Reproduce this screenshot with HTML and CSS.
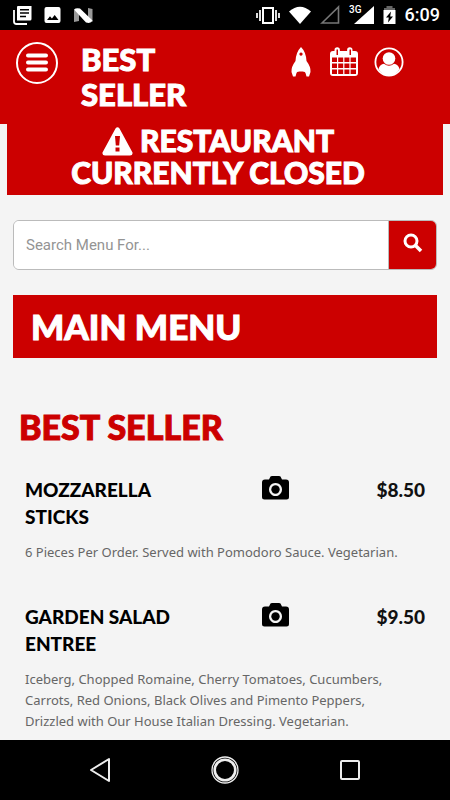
FILE: index.html
```html
<!DOCTYPE html>
<html lang="en">
<head>
<meta charset="utf-8">
<meta name="viewport" content="width=device-width, initial-scale=1">
<title>Main Menu</title>
<link rel="stylesheet" href="styles.css">
</head>
<body>
<div class="status">
  <div class="status-left">
    <svg width="20" height="20" viewBox="0 0 20 20"><path d="M2 5v11.500a2.500 2.500 0 0 0 2.500 2.500H15" fill="none" stroke="#fff" stroke-width="1.800"/><path fill="#fff" fill-rule="evenodd" d="M6 1h13.500v13a1.500 1.500 0 0 1-1.500 1.500H5V2A1 1 0 0 1 6 1zM8 4v1.500h9V4zM8 7.300v1.500h9V7.300zM8 10.700v1.500h6v-1.500z"/></svg>
    <svg width="18" height="20" viewBox="0 0 18 20"><path fill="#fff" fill-rule="evenodd" d="M2.500 2h12A2 2 0 0 1 16.500 4v12a2 2 0 0 1-2 2h-12a2 2 0 0 1-2-2V4a2 2 0 0 1 2-2zM3 15h11.500l-3.800-5-2.800 3.500L6 11.200z"/></svg>
    <svg width="20" height="20" viewBox="0 0 20 20"><path fill="#999" d="M0 5l5 1v10l-5 1zM14 3l4.500 1v13l-4.500-3z"/><path fill="#fff" d="M0 4.500Q2 2.500 6 3.500L18.500 15.500Q17 19 12 17.500z"/></svg>
  </div>
  <div class="status-right">
    <svg width="24" height="20" viewBox="0 0 24 20"><path fill="none" stroke="#fff" stroke-width="2" d="M7 3h10v15H7z"/><path stroke="#ddd" stroke-width="2" d="M4 5v11M20 5v11M1 8v5M23 8v5"/></svg>
    <svg width="22" height="20" viewBox="0 0 22 20"><path fill="#fff" d="M0 6.500Q11-3 22 6.500L11 19z"/></svg>
    <svg width="20" height="20" viewBox="0 0 20 20"><path fill="none" stroke="#777" stroke-width="1.600" d="M2 18L18.500 2v16z"/></svg>
    <span class="network"><small>3G</small><svg width="20" height="20" viewBox="0 0 20 20"><path fill="#fff" d="M0 19L20 1v18z"/></svg></span>
    <svg width="13" height="20" viewBox="0 0 13 20"><path fill="#666" d="M3.500 1h6v2H12v2H1V3h2.500z"/><path fill="#fff" d="M.500 5h12v14H.500z"/><path fill="#000" d="M8 6.500l-5 6h2.800L5 17.500l5-6H7.200z"/></svg>
    <time>6:09</time>
  </div>
</div>
<main class="app">
  <header class="topbar">
    <button class="menu-button" aria-label="Menu"><svg width="24" height="20" viewBox="0 0 24 20"><path stroke="#fff" stroke-width="4" stroke-linecap="round" d="M3 2.500h18M3 9.500h18M3 16.500h18"/></svg></button>
    <h1>BEST SELLER</h1>
    <nav class="tools">
      <a href="#orders" aria-label="Orders"><svg width="24" height="30" viewBox="-1 0 24 30"><path fill="#fff" fill-rule="evenodd" d="M10 0Q15 5 15.500 14Q20 20 19.500 25L18 29.500H15.500L14.500 26Q14.500 24 10 24.500Q5.500 24 5.500 26L4.500 29.500H2L.500 25Q0 20 4.500 14Q5 5 10 0zM10 5.500a1.600 1.600 0 1 0 .01 0z"/></svg></a>
      <a href="#calendar" aria-label="Calendar"><svg width="28" height="29" viewBox="0 0 28 29"><path fill="#fff" fill-rule="evenodd" d="M3 4h1.500V3a2.700 2.700 0 0 1 5.400 0v1h7.200V3a2.700 2.700 0 0 1 5.400 0v1H25a3 3 0 0 1 3 3v19a3 3 0 0 1-3 3H3a3 3 0 0 1-3-3V7a3 3 0 0 1 3-3zM6.500 2.500v5.500H8V2.500zM19.500 2.500v5.500H21V2.500zM2 10.500V15h5v-4.500zM8.200 10.500V15h5v-4.500zM14.400 10.500V15h5v-4.500zM20.600 10.500V15h5.400v-4.500zM2 16.500V21h5v-4.500zM8.200 16.500V21h5v-4.500zM14.400 16.500V21h5v-4.500zM20.600 16.500V21h5.400v-4.500zM2 22.500V27h5v-4.500zM8.200 22.500V27h5v-4.500zM14.400 22.500V27h5v-4.500zM20.600 22.500V27h5.400v-4.500z"/></svg></a>
      <a href="#account" aria-label="Account"><svg width="30" height="30" viewBox="0 0 30 30"><circle cx="15" cy="15" r="13.600" fill="none" stroke="#fff" stroke-width="1.800"/><circle cx="15" cy="11.500" r="6.300" fill="#fff"/><path fill="#fff" d="M4.500 22Q6 17 10 16.800Q15 20.800 20 16.800Q24 17 25.500 22Q22 28.500 15 28.500T4.500 22z"/></svg></a>
    </nav>
  </header>
  <div class="notice" role="alert"><svg width="31" height="29" viewBox="0 0 31 29"><path fill="#fff" fill-rule="evenodd" d="M13.500 1.500Q15.500-1 17.500 1.500L30.500 25.500Q31 28.500 28 28.500H3Q0 28.500.500 25.500zM13 9l.800 9.500h3.400L18 9zM13.500 20.500v4h4v-4z"/></svg> RESTAURANT CURRENTLY CLOSED</div>
  <form class="search">
    <input type="search" placeholder="Search Menu For..." aria-label="Search menu">
    <button type="button" aria-label="Search"><svg width="20" height="20" viewBox="0 0 20 20"><circle cx="8" cy="8" r="6" fill="none" stroke="#fff" stroke-width="3"/><path d="M12.500 12.500l5.500 5.500" stroke="#fff" stroke-width="3.500"/></svg></button>
  </form>
  <h2 class="menu-title">MAIN MENU</h2>
  <section>
    <h2 class="category">BEST SELLER</h2>
    <article class="item">
      <h3>MOZZARELLA STICKS</h3>
      <button class="photo" aria-label="View photo of Mozzarella Sticks"><svg width="27" height="24" viewBox="0 0 27 24"><path fill-rule="evenodd" d="M3 3.500h4L8.500.500Q9 0 10 0h7q1 0 1.500.500L20 3.500h4a3 3 0 0 1 3 3V21a2.500 2.500 0 0 1-2.500 2.500h-22A2.500 2.500 0 0 1 0 21V6.500a3 3 0 0 1 3-3zM13.500 7a6.500 6.500 0 1 0 .01 0z"/><circle cx="13.500" cy="13.500" r="4.200"/></svg></button>
      <span class="price">$8.50</span>
      <p>6 Pieces Per Order. Served with Pomodoro Sauce. Vegetarian.</p>
    </article>
    <article class="item">
      <h3>GARDEN SALAD ENTREE</h3>
      <button class="photo" aria-label="View photo of Garden Salad Entree"><svg width="27" height="24" viewBox="0 0 27 24"><path fill-rule="evenodd" d="M3 3.500h4L8.500.500Q9 0 10 0h7q1 0 1.500.500L20 3.500h4a3 3 0 0 1 3 3V21a2.500 2.500 0 0 1-2.500 2.500h-22A2.500 2.500 0 0 1 0 21V6.500a3 3 0 0 1 3-3zM13.500 7a6.500 6.500 0 1 0 .01 0z"/><circle cx="13.500" cy="13.500" r="4.200"/></svg></button>
      <span class="price">$9.50</span>
      <p>Iceberg, Chopped Romaine, Cherry Tomatoes, Cucumbers, Carrots, Red Onions, Black Olives and Pimento Peppers, Drizzled with Our House Italian Dressing. Vegetarian.</p>
    </article>
  </section>
</main>
<footer class="system-nav">
  <button aria-label="Back"><svg width="30" height="30" viewBox="0 0 30 30"><path fill="none" stroke="#eee" stroke-width="2" stroke-linejoin="round" d="M24 4v22L6 15z"/></svg></button>
  <button aria-label="Home"><svg width="30" height="30" viewBox="0 0 30 30"><circle cx="15" cy="15" r="13" fill="none" stroke="#eee" stroke-width="1.300"/><circle cx="15" cy="15" r="10.300" fill="none" stroke="#eee" stroke-width="2.600"/></svg></button>
  <button aria-label="Recent apps"><svg width="30" height="30" viewBox="0 0 30 30"><rect x="6" y="6" width="18" height="18" rx="1" fill="none" stroke="#eee" stroke-width="2"/></svg></button>
</footer>
</body>
</html>
```
FILE: styles.css
```css
* { box-sizing: border-box; }
body {
  margin: 0;
  height: 100vh;
  display: flex;
  flex-direction: column;
  background: #f4f4f4;
  color: #000;
  font-family: Lato, sans-serif;
}
svg { display: block; }
button { border: 0; padding: 0; background: none; cursor: pointer; }
h1, h2, h3, p { margin: 0; }

.status {
  flex: none;
  height: 30px;
  padding: 0 10px 0 12px;
  display: flex;
  align-items: center;
  justify-content: space-between;
  background: #000;
  color: #fff;
  font-family: Roboto, sans-serif;
}
.status-left { display: flex; gap: 12px; }
.status-right { display: flex; align-items: center; gap: 9px; }
.network { display: flex; align-items: flex-start; }
.network small {
  font-size: 10px;
  line-height: 10px;
  font-weight: 500;
  margin-right: -8px;
}
.status time { font-size: 18px; font-weight: 500; line-height: 30px; }

.app { flex: 1; min-height: 0; overflow: hidden; }
.topbar {
  display: flex;
  align-items: flex-start;
  padding: 12px 46px 12px 16px;
  background: #c00;
  color: #fff;
}
.topbar h1, .notice, .menu-title, .category {
  font-weight: 900;
  -webkit-text-stroke: 1px currentColor;
}
.menu-button {
  width: 42px;
  height: 42px;
  display: grid;
  place-items: center;
  border: 2px solid #fff;
  border-radius: 50%;
}
.topbar h1 {
  width: 33%;
  margin-left: 23px;
  font-size: 31px;
  line-height: 35px;
}
.tools {
  flex: 1;
  display: flex;
  justify-content: flex-end;
  padding-top: 5px;
  gap: 16px;
}
.notice {
  margin: 0 7px;
  padding: 0 70px 7px 56px;
  background: #c00;
  color: #fff;
  font-size: 30px;
  line-height: 32px;
  text-align: center;
}
.notice svg { display: inline-block; vertical-align: -4px; }

.search {
  display: flex;
  height: 50px;
  margin: 25px 13px;
  border: 1px solid #bbb;
  border-radius: 6px;
  overflow: hidden;
}
.search input {
  flex: 1;
  min-width: 0;
  padding: 0 12px;
  border: 0;
  border-right: 1px solid #bbb;
  background: #fff;
  font: 15px Roboto, sans-serif;
}
.search input::placeholder { color: #949494; }
.search button {
  width: 47px;
  display: grid;
  place-items: center;
  padding-bottom: 4px;
  background: #c00;
}
.menu-title {
  margin: 0 13px;
  padding: 10px 18px;
  background: #c00;
  color: #fff;
  font-size: 35px;
  line-height: 43px;
}
.category {
  margin: 47px 19px 27px;
  color: #c00;
  font-size: 34px;
  line-height: 44px;
}
.item {
  display: grid;
  grid-template-columns: 19fr 12fr 9fr;
  align-items: start;
  margin: 0 25px 40px;
}
.item h3, .price { font-size: 19px; font-weight: 900; line-height: 27px; }
.photo { justify-self: center; }
.price { text-align: right; color: #111; }
.item p {
  grid-column: 1 / -1;
  margin-top: 12px;
  padding-right: 12px;
  color: #666;
  font: 13px/21px "Noto Sans", sans-serif;
}

.system-nav {
  flex: none;
  height: 60px;
  padding: 0 85px;
  display: flex;
  align-items: center;
  justify-content: space-between;
  background: #000;
}
```
